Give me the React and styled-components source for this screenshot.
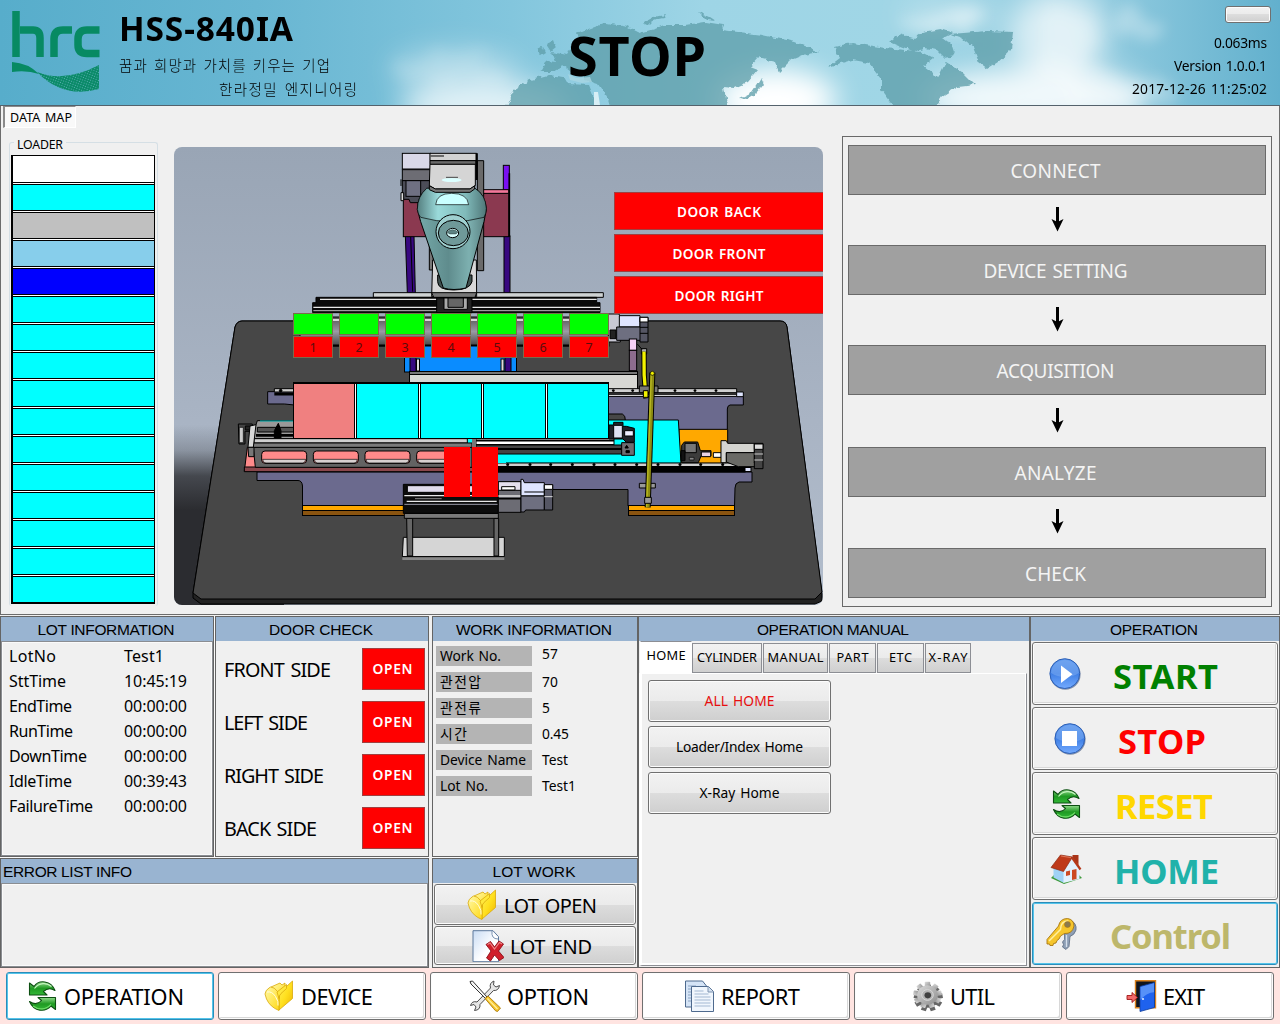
import React, { useLayoutEffect, useRef, useState } from "react";
import styled, { createGlobalStyle } from "styled-components";

const UI = '"Noto Sans", "Noto Sans CJK KR", sans-serif';
const HEAD = '"Liberation Sans", "Noto Sans CJK KR", sans-serif';

const GlobalStyle = createGlobalStyle`
  * { box-sizing: border-box; }
  body { margin: 0; background: #f0f0f0; overflow: hidden; font-family: ${UI}; }
  button { font: inherit; color: inherit; margin: 0; padding: 0; }
`;

/* ---------- text ---------- */

const TextBox = styled.span`
  display: inline-block;
  flex: none;
  white-space: pre;
  font-family: ${(p) => p.$family || UI};
  font-size: ${(p) => p.$size}px;
  font-weight: ${(p) => p.$weight || 400};
  color: ${(p) => p.$color || "#000"};
  line-height: ${(p) => p.$line || 1.2};
  padding-top: ${(p) => (p.$family ? 0 : 0.1)}em;
  word-spacing: ${(p) => (p.$family ? 0 : 0.1)}em;
`;

/* Tracks the letters so that the text spans the given width. */
function Text({ w, size, weight, color, family, line, children }) {
  const ref = useRef(null);
  const [track, setTrack] = useState(0);
  useLayoutEffect(() => {
    if (!w) return;
    const el = ref.current;
    el.style.letterSpacing = "0px";
    const natural = el.getBoundingClientRect().width;
    const count = Math.max(1, String(children).length - 1);
    const next = (w - natural) / count;
    el.style.letterSpacing = `${next}px`;
    setTrack(next);
  }, [w, children]);
  return (
    <TextBox
      ref={ref}
      $size={size}
      $weight={weight}
      $color={color}
      $family={family}
      $line={line}
      style={{ letterSpacing: track, marginRight: -track }}
    >
      {children}
    </TextBox>
  );
}

/* ---------- layout ---------- */

const Screen = styled.div`
  width: 1280px;
  height: 1024px;
  display: flex;
  flex-direction: column;
  background: #f0f0f0;
  overflow: hidden;
`;

const Header = styled.header`
  position: relative;
  height: 106px;
  border-bottom: 1px solid #54626c;
  display: grid;
  grid-template-columns: 560px 154px 1fr;
  overflow: hidden;
`;

const HeaderArt = styled.svg`
  position: absolute;
  inset: 0;
`;

const Brand = styled.div`
  position: relative;
  display: flex;
  padding: 10px 0 0 11px;
  gap: 18px;
`;

const BrandText = styled.div`
  display: flex;
  flex-direction: column;
  align-items: flex-start;
  margin-top: -8px;
`;

const Slogan = styled.div`
  display: flex;
  height: 24px;
  align-items: center;
  padding-left: ${(p) => p.$indent || 0}px;
`;

const TitleRow = styled.div`
  height: 51px;
  display: flex;
  align-items: flex-start;
`;

const State = styled.div`
  position: relative;
  display: flex;
  align-items: center;
  justify-content: center;
`;

const Info = styled.div`
  position: relative;
  display: flex;
  flex-direction: column;
  align-items: flex-end;
  padding: 6px 9px 0 0;
`;

const InfoLine = styled.div`
  height: 23px;
  display: flex;
  align-items: center;
  padding-right: 4px;
`;

const MiniButton = styled.button`
  width: 46px;
  height: 17px;
  margin-bottom: 8px;
  border: 1px solid #707070;
  border-radius: 3px;
  box-shadow: inset 0 0 0 1px #fcfcfc;
  background: linear-gradient(#f2f2f2 0%, #ebebeb 50%, #dddddd 50%, #cfcfcf 100%);
`;

const MapPage = styled.section`
  height: 509px;
  border: 1px solid #6c6c6c;
  border-top: 0;
  display: flex;
  background: #f0f0f0;
`;

const LoaderColumn = styled.div`
  width: 173px;
  display: flex;
  flex-direction: column;
  align-items: flex-start;
`;

const PageTab = styled.div`
  margin-left: 2px;
  width: 73px;
  height: 22px;
  padding-left: 5px;
  display: flex;
  align-items: center;
  background: #f9f9f9;
  border: 1px solid #fff;
  border-top: 1px solid #8a8a8a;
  border-left: 2px solid #8a8a8a;
`;

const LoaderBox = styled.fieldset`
  margin: 7px 0 0 8px;
  padding: 0 2px 0 1px;
  width: 149px;
  height: 471px;
  border: 1px solid #d5dfe5;
  border-bottom: 0;
  border-radius: 3px;
  min-width: 0;
`;

const LoaderLegend = styled.legend`
  margin-left: 3px;
  padding: 0 3px;
  height: 15px;
  line-height: 1;
`;

const LoaderList = styled.div`
  margin-top: 5px;
  border: 1px solid #000;
  border-left-width: 2px;
  width: 144px;
  background: #fff;
`;

const LoaderSlot = styled.div`
  height: 27px;
  background: ${(p) => p.$color};
  border-bottom: 1px solid #000;
  border-top: 1px solid #000;
  margin-bottom: 1px;
  &:first-child {
    border-top: 0;
  }
  &:last-child {
    margin-bottom: 0;
  }
`;

const Machine = styled.div`
  position: relative;
  width: 649px;
  height: 458px;
  margin-top: 41px;
  border-radius: 8px;
  overflow: hidden;
`;

const MachineArt = styled.svg`
  display: block;
`;

const DoorStack = styled.div`
  position: absolute;
  right: 0;
  top: 45px;
  width: 209px;
  display: flex;
  flex-direction: column;
  gap: 4px;
`;

const DoorFlag = styled.div`
  height: 38px;
  background: #ff0000;
  border: 1px solid #a04040;
  border-right: 0;
  display: flex;
  align-items: center;
  justify-content: center;
`;

const CellGrid = styled.div`
  position: absolute;
  left: 119px;
  top: 166px;
  display: grid;
  grid-template-columns: repeat(7, 40px);
  column-gap: 6px;
  row-gap: 1px;
`;

const Cell = styled.div`
  height: 22px;
  background: ${(p) => (p.$on ? "#00ff00" : "#ff0000")};
  border: 1px solid #7c6a4c;
  display: flex;
  align-items: center;
  justify-content: center;
`;

const Tray = styled.div`
  position: absolute;
  left: 119px;
  top: 235px;
  width: 316px;
  height: 57px;
  display: grid;
  grid-template-columns: repeat(5, 1fr);
  column-gap: 3px;
  background: #fff;
  border: 1px solid #000;
  border-top-width: 2px;
`;

const TraySlot = styled.div`
  background: ${(p) => p.$color};
  box-shadow: 0 0 0 1px #000;
`;

const Pair = styled.div`
  position: absolute;
  left: 270px;
  top: 300px;
  display: flex;
  gap: 2px;
`;

const PairBlock = styled.div`
  width: 26px;
  height: 50px;
  background: #ff0000;
`;

const Flow = styled.div`
  width: 430px;
  height: 471px;
  margin: 30px 0 0 19px;
  border: 1px solid #696969;
  padding: 8px 5px;
  display: grid;
  grid-template-rows: 50px 50px 50px 50px 50px 52px 50px 51px 50px;
`;

const FlowStep = styled.div`
  background: #a0a0a0;
  border: 1px solid #6a6a6a;
  display: flex;
  align-items: center;
  justify-content: center;
  padding-right: 3px;
`;

const FlowArrow = styled.div`
  display: flex;
  align-items: center;
  justify-content: center;
  padding: 0 1px 3px 0;
`;

const Bottom = styled.section`
  margin-top: 1px;
  height: 352px;
  display: grid;
  grid-template-columns: 429px 3px 206px 392px 250px;
  background: #f0f0f0;
`;

const Column = styled.div`
  display: flex;
  flex-direction: column;
  gap: 1px;
  background: #fbfbfb;
`;

const PairRow = styled.div`
  display: flex;
  gap: 1px;
  height: 241px;
`;

const Panel = styled.section`
  width: ${(p) => (p.$w ? `${p.$w}px` : "auto")};
  height: ${(p) => p.$h}px;
  border: 1px solid #646464;
  background: #f0f0f0;
  display: flex;
  flex-direction: column;
`;

const PanelHead = styled.h2`
  margin: 0;
  height: 24px;
  flex: none;
  background: #99b4d1;
  display: flex;
  align-items: center;
  justify-content: ${(p) => (p.$left ? "flex-start" : "center")};
  padding: 2px 4px 0 2px;
`;

const Inset = styled.div`
  flex: 1;
  border: 1px solid #8a8d92;
  box-shadow: inset 0 0 0 1px #fafafa;
  padding: ${(p) => p.$pad || "0"};
`;

const LotRow = styled.div`
  display: grid;
  grid-template-columns: 115px 1fr;
  align-items: center;
  height: 25px;
`;

const DoorRow = styled.div`
  height: 42px;
  margin: 7px 3px 4px 8px;
  display: flex;
  align-items: center;
  justify-content: space-between;
`;

const OpenFlag = styled.div`
  width: 63px;
  height: 42px;
  background: #ff0000;
  border: 1px solid #a04040;
  display: flex;
  align-items: center;
  justify-content: center;
  padding-right: 2px;
`;

const WorkList = styled.div`
  padding: 5px 0 0 3px;
  display: flex;
  flex-direction: column;
  gap: 6px;
`;

const WorkRow = styled.div`
  display: flex;
  height: 20px;
  align-items: center;
  gap: 10px;
`;

const WorkLabel = styled.div`
  width: 96px;
  height: 20px;
  background: #b4b4b4;
  padding-left: 4px;
  display: flex;
  align-items: center;
`;

const WorkValue = styled.div`
  display: flex;
  margin-top: ${(p) => p.$shift || 0}px;
`;

const glass = "linear-gradient(#f2f2f2 0%, #ebebeb 50%, #dddddd 50%, #cfcfcf 100%)";

const PushButton = styled.button`
  width: ${(p) => (p.$w ? `${p.$w}px` : "auto")};
  height: ${(p) => p.$h}px;
  flex: none;
  border: 1px solid ${(p) => (p.$focus ? "#2a8dba" : "#707070")};
  border-radius: 3px;
  box-shadow: ${(p) =>
    p.$focus
      ? "inset 0 0 0 1px #54c4ea"
      : p.$flat
      ? "inset 0 0 0 1px #fcfcfc, inset -2px -2px 0 0 #d8d8d8"
      : "inset 0 0 0 1px #fcfcfc"};
  background: ${(p) => p.$fill || glass};
  display: flex;
  align-items: center;
  justify-content: ${(p) => (p.$pad === undefined ? "center" : "flex-start")};
  padding-left: ${(p) => p.$pad || 0}px;
  gap: ${(p) => p.$gap || 0}px;
`;

const LotButtons = styled.div`
  flex: 1;
  padding: 1px 1px 0;
  display: flex;
  flex-direction: column;
  gap: 1px;
`;

const TabArea = styled.div`
  flex: 1;
  display: flex;
  flex-direction: column;
  padding: 0 2px 1px 0;
`;

const TabStrip = styled.div`
  display: flex;
  align-items: flex-end;
  height: 32px;
  padding-left: 1px;
`;

const Tab = styled.div`
  width: ${(p) => p.$w}px;
  height: ${(p) => (p.$active ? 32 : 30)}px;
  border: 1px solid ${(p) => (p.$active ? "#fff" : "#8c8e94")};
  border-top-color: #8c8e94;
  margin-right: ${(p) => (p.$active ? 0 : 1)}px;
  background: ${(p) => (p.$active ? "#fff" : glass)};
  display: flex;
  align-items: center;
  justify-content: center;
  padding-bottom: ${(p) => (p.$active ? 4 : 1)}px;
`;

const TabPage = styled.div`
  flex: 1;
  border: 1px solid #8c8e94;
  border-left: 3px solid #fff;
  border-top: 1px solid #fff;
  box-shadow: inset -1px -2px 0 #fff;
  padding: 6px 0 0 6px;
  display: flex;
  flex-direction: column;
  gap: 4px;
`;

const OpButtons = styled.div`
  padding: 1px 0 0 1px;
  display: flex;
  flex-direction: column;
  gap: 2px;
`;

const Nav = styled.nav`
  flex: 1;
  background: #ffe4e1;
  display: flex;
  gap: 4px;
  padding: 4px 6px 0;
`;

/* ---------- icons ---------- */

const Icon = ({ children, size = 32 }) => (
  <svg width={size} height={size} viewBox="0 0 32 32" style={{ flex: "none" }}>
    {children}
  </svg>
);

const PlayIcon = () => (
  <Icon>
    <defs>
      <linearGradient id="ball" x1="0" y1="0" x2="0" y2="1">
        <stop offset="0" stopColor="#5b97ee" />
        <stop offset=".5" stopColor="#3f7fe4" />
        <stop offset="1" stopColor="#74abff" />
      </linearGradient>
    </defs>
    <circle cx="16.3" cy="16.5" r="15.3" fill="#38507c" opacity=".6" />
    <circle cx="15.8" cy="15.6" r="14.9" fill="url(#ball)" stroke="#2d5fb4" />
    <path d="M2 15a14 13 0 0 1 28 0q-6 4-14 4t-14-4z" fill="#8ab5f5" opacity=".45" />
    <path d="M12 7.5v17.5l11.5-8.7z" fill="#fff" />
  </Icon>
);

const StopIcon = () => (
  <Icon>
    <circle cx="16.3" cy="16.5" r="15.3" fill="#38507c" opacity=".6" />
    <circle cx="15.8" cy="15.6" r="14.9" fill="url(#ball)" stroke="#2d5fb4" />
    <path d="M2 15a14 13 0 0 1 28 0q-6 4-14 4t-14-4z" fill="#8ab5f5" opacity=".45" />
    <rect x="8" y="8" width="15" height="15" fill="#fff" />
  </Icon>
);

const RefreshIcon = () => (
  <Icon>
    <defs>
      <linearGradient id="leaf" x1="0" y1="0" x2="0" y2="1">
        <stop offset="0" stopColor="#8fd98a" />
        <stop offset=".5" stopColor="#1f9a22" />
        <stop offset="1" stopColor="#33b838" />
      </linearGradient>
    </defs>
    <g fill="url(#leaf)" stroke="#0d4f12" strokeWidth="1.1" strokeLinejoin="round">
      <path d="M2.500 3L7 6.500C12-.8 24 .3 28 10.500C24 8 19.500 8.500 16.500 11.500L20 15H2.500z" />
      <path d="M28.500 29.500L24 26C18.500 32.500 7 32 2.500 21.500C7 24.500 11.500 24 14.500 20.500L11 17.500H28.500z" />
    </g>
    <path d="M7.500 8.500C12 2.500 20 2.300 24.500 6.500" fill="none" stroke="#c4f3bd" strokeWidth="1.200" />
    <path d="M6 26C11 30 19 30 24 24.300" fill="none" stroke="#6ddb66" strokeWidth="1.200" />
  </Icon>
);

const HouseIcon = () => (
  <Icon>
    <path d="M1 25l13 6 18-6-5-5H6z" fill="#3d9a3a" />
    <path d="M3.500 14l10.500 5V30L3.500 24.500z" fill="#9fd2f5" />
    <path d="M13.500 18L22 5.500l7.500 10V26L13.500 30z" fill="#e2f1fd" />
    <path d="M22.500 2h6v10l-6-6z" fill="#a93519" />
    <path d="M1 14.500L10.500 2L22.500 4L13.500 18.500z" fill="#bf3a1a" stroke="#8a2a12" strokeWidth=".7" />
    <path d="M22 4.500l8.500 12" stroke="#b5381a" strokeWidth="2.200" />
    <path d="M11 3l10 1.600" stroke="#e2795a" strokeWidth="1" />
    <path d="M22 17l4.500-1v10l-4.500 1z" fill="#cc4a22" />
    <path d="M16 18.500l4-1v4.500l-4 1z" fill="#cc4a22" />
  </Icon>
);

const KeysIcon = () => (
  <Icon>
    <path d="M24 2q7 3 6 10q-1.500 5-6 6.500l-1 10-3 3-3.500-2.500 1-2.500-1-2.500 2-2.500v-8z" fill="#8e9fb5" stroke="#5b6a80" strokeWidth=".8" />
    <path d="M20.500 17v12" stroke="#d5dfeb" strokeWidth="1.300" />
    <path d="M12.500 8q1.500-7.500 9-7.500q6.500 1 6.500 7.500q-1.500 8-9.500 7.500l-4 2.500-1.500 3-2 1.500-1 2.500-2.500.500-.5 2H4l-.5-1.500H1v-4.500z" fill="#f5c52c" stroke="#a87710" strokeWidth=".9" />
    <path d="M3 23L14.500 11.500q0-8.500 8-8.500" fill="none" stroke="#fff0a0" strokeWidth="1.500" />
    <circle cx="21.500" cy="6.500" r="3" fill="#8a7a50" stroke="#a87710" strokeWidth=".6" />
  </Icon>
);

const FolderIcon = () => (
  <Icon>
    <defs>
      <linearGradient id="fold" x1="0" y1="0" x2="1" y2="1">
        <stop offset="0" stopColor="#fff15a" />
        <stop offset=".5" stopColor="#ffe01f" />
        <stop offset="1" stopColor="#eeb600" />
      </linearGradient>
      <linearGradient id="foldLight" x1="0" y1="0" x2="1" y2="1">
        <stop offset="0" stopColor="#fff9a8" />
        <stop offset="1" stopColor="#ffd916" />
      </linearGradient>
    </defs>
    <g stroke="#d9a80a" strokeWidth=".8" strokeLinejoin="round">
      <path d="M7 7l9-4 2 2 3-2v10l-8 8z" fill="url(#foldLight)" />
      <path d="M15 16q0-3 2-4.500L28.500 1V18.500L15 30z" fill="url(#fold)" />
      <path d="M1 14q.5-4 4-6l1.500-1q4 0 7 4.500l1.500 3V30.500Q6 27 2.500 19z" fill="url(#foldLight)" />
      <path d="M13 12L22.500 4.500v4L17 13.500q-2 2-2 5z" fill="#ffe83c" />
    </g>
    <path d="M3 12q5-1 8.500 4.500t2.500 9" fill="none" stroke="#fffde0" strokeWidth="1" />
  </Icon>
);

const PageDeleteIcon = () => (
  <Icon>
    <defs>
      <linearGradient id="sheet" x1="0" y1="0" x2="1" y2="1">
        <stop offset="0" stopColor="#c9dcf4" />
        <stop offset=".6" stopColor="#ffffff" />
      </linearGradient>
    </defs>
    <path d="M1 .7h20l5.500 6v25H1z" fill="url(#sheet)" stroke="#5c789c" />
    <path d="M20 1q-1 8 6 8" fill="#fff" stroke="#7c93b0" />
    <path d="M14 14.500l4.500-3 4 5.500 4.500-6 4.500 3-5 7 5.500 6.500-4.500 3-5-5.500-4 6-4-3 4.500-7z" fill="#d0202b" stroke="#8c0f18" strokeWidth=".9" />
    <path d="M15.500 14.500l2.500-1.500 4.500 6 5-6.500 2.500 1.500" fill="none" stroke="#f08a8a" strokeWidth="1.100" />
  </Icon>
);

const ToolsIcon = () => (
  <Icon>
    <path d="M25 1q-5 2-3.500 7L8 22q-5-1.500-6.500 3.500l3.500-1 2 2.500-1.500 3.500q6-.5 5.500-6L24.500 10.500q5 .5 6-5l-3.500 1.500-2.500-2z" fill="#e6e6e6" stroke="#4c4c4c" strokeWidth="1" />
    <path d="M1 1.500l2.500-.5L18 17l-1.500 1.500L2 4z" fill="#f5f5f5" stroke="#333" strokeWidth="1" />
    <path d="M16 18.500l3-2.500L31.500 28l-3 3.500q-2 0-4-3z" fill="#f7c52a" stroke="#a8780c" strokeWidth=".9" />
    <path d="M18.500 18.500l10 10.500" stroke="#fff0a0" strokeWidth="1.200" />
  </Icon>
);

const DocsIcon = () => (
  <Icon>
    <path d="M2.500 1h17l4 5v21h-21z" fill="#d5e4f6" stroke="#4e6a8e" />
    <path d="M5 6h8M5 9h5M5 12h5M5 15h5M5 18h5M5 21h5" stroke="#8aa3c2" />
    <path d="M8.500 6.500h17l5 5v20h-22z" fill="#f0f6fd" stroke="#4e6a8e" />
    <path d="M25 6.500v5.500h5.500" fill="#d3e0f0" stroke="#7c93b0" />
    <path d="M11.500 11h9M11.500 14h14M11.500 17h16M11.500 20h16M11.500 23h16M11.500 26h16" stroke="#a3b8d2" />
  </Icon>
);

const GearIcon = () => {
  const teeth = Array.from({ length: 9 }, (_, i) => i * 40);
  return (
    <Icon>
      <defs>
        <linearGradient id="steel" x1="0" y1="0" x2="1" y2="1">
          <stop offset="0" stopColor="#dcdcdc" />
          <stop offset="1" stopColor="#8c8c8c" />
        </linearGradient>
      </defs>
      <g transform="translate(16.300 18) scale(1 .92)" fill="#666">
        <circle r="10.500" />
        {teeth.map((a) => (
          <rect key={a} x="-2.600" y="-14.500" width="5.200" height="6" transform={`rotate(${a})`} />
        ))}
      </g>
      <g transform="translate(15.500 15) scale(1 .92)" fill="url(#steel)">
        {teeth.map((a) => (
          <rect key={a} x="-2.700" y="-14.300" width="5.400" height="6" rx=".8" transform={`rotate(${a})`} />
        ))}
        <circle r="10.500" />
        <circle r="5.800" fill="#b4b4b4" stroke="#d8d8d8" />
        <circle cx=".3" cy=".4" r="3.300" fill="#404040" />
      </g>
    </Icon>
  );
};

const ExitIcon = () => (
  <Icon>
    <path d="M9.500.8h20v27h-20z" fill="#10151e" stroke="#d9821f" strokeWidth="1.400" />
    <path d="M14 6.500L28.500 2.500V27.500L14 31.500z" fill="#1f62ee" stroke="#123f9c" strokeWidth=".8" />
    <path d="M14.500 7l13.500-3.800v9q-7 0-13.500 7.500z" fill="#6ba2fb" opacity=".75" />
    <circle cx="17" cy="19" r="1.100" fill="#d8e6ff" />
    <path d="M1 15.500h5v-3l5.500 5-5.500 5v-3H1z" fill="#f26a6a" stroke="#a01818" strokeWidth=".9" />
  </Icon>
);

const DownArrow = () => (
  <svg width="14" height="26" viewBox="0 0 14 26">
    <path d="M7.500 1v16" stroke="#000" strokeWidth="3" />
    <path d="M1.500 13L7.500 25.500L13.500 13L7.500 16z" fill="#000" />
  </svg>
);

const Logo = () => (
  <svg width="90" height="84" viewBox="0 0 90 84">
    <defs>
      <pattern id="mesh" width="2.500" height="2.500" patternUnits="userSpaceOnUse" patternTransform="rotate(20)">
        <rect width="2.500" height="2.500" fill="#0a8a68" />
        <circle cx="1.200" cy="1.200" r=".55" fill="#5fb3b8" />
      </pattern>
    </defs>
    <g fill="none" stroke="#078a63" strokeWidth="7.500">
      <path d="M5 1v46" />
      <path d="M9 20h13q7 0 7 8v19" />
      <path d="M43 47V29q0-9 9-9h9" />
      <path d="M88.500 20H76q-9 0-9 9v6q0 8.500 9 8.500h12.500" />
    </g>
    <path d="M1 52q16 1 27 12q-12-4-27-2z" fill="#078a63" />
    <path d="M26 62q28 11 62-7v24q-36 10-62-17z" fill="url(#mesh)" />
  </svg>
);

/* ---------- pictures ---------- */

const HeaderPicture = () => (
  <HeaderArt width="1280" height="105" viewBox="0 0 1280 105">
    <defs>
      <linearGradient id="sky" x1="0" x2="1">
        <stop offset="0" stopColor="#57adcb" />
        <stop offset=".2" stopColor="#68b6d2" />
        <stop offset=".4" stopColor="#83c6dd" />
        <stop offset=".55" stopColor="#9ed5e6" />
        <stop offset=".7" stopColor="#a0d6e6" />
        <stop offset=".86" stopColor="#92cce0" />
        <stop offset="1" stopColor="#62b0cd" />
      </linearGradient>
      <filter id="soft" x="-50%" y="-60%" width="200%" height="220%">
        <feGaussianBlur stdDeviation="14" />
      </filter>
      <filter id="wisp" x="-30%" y="-30%" width="160%" height="160%">
        <feTurbulence type="fractalNoise" baseFrequency=".035" numOctaves="4" seed="4" result="n" />
        <feDisplacementMap in="SourceGraphic" in2="n" scale="40" xChannelSelector="R" yChannelSelector="G" result="d" />
        <feGaussianBlur in="d" stdDeviation="7" />
      </filter>
      <filter id="coast" x="-5%" y="-10%" width="110%" height="120%">
        <feTurbulence type="fractalNoise" baseFrequency=".16" numOctaves="2" seed="8" result="n" />
        <feDisplacementMap in="SourceGraphic" in2="n" scale="6" xChannelSelector="R" yChannelSelector="G" />
      </filter>
    </defs>
    <rect width="1280" height="105" fill="url(#sky)" />
    <g fill="#fff" filter="url(#soft)">
      <ellipse cx="455" cy="70" rx="65" ry="22" opacity=".35" />
      <ellipse cx="485" cy="108" rx="85" ry="26" opacity=".75" />
      <ellipse cx="775" cy="100" rx="62" ry="32" opacity="1" />
      <ellipse cx="1058" cy="34" rx="48" ry="44" opacity=".65" />
      <ellipse cx="1035" cy="98" rx="115" ry="30" opacity=".85" />
      <ellipse cx="950" cy="15" rx="50" ry="12" opacity=".4" />
    </g>
    <g fill="#fff" filter="url(#wisp)">
      <ellipse cx="1062" cy="45" rx="30" ry="40" opacity=".22" />
      <ellipse cx="1135" cy="26" rx="20" ry="14" opacity=".3" />
      <ellipse cx="945" cy="20" rx="42" ry="9" opacity=".45" />
      <ellipse cx="450" cy="68" rx="60" ry="14" opacity=".12" />
      <ellipse cx="1120" cy="90" rx="60" ry="14" opacity=".25" />
    </g>
    <g fill="#5f9fab" opacity=".78" filter="url(#coast)">
      <path d="M506 106L514 90L530 80L549 75L563 77L567 84L588 85L592 95L600 106Z" />
      <path d="M541 72L547 61L556 62L552 52L566 55L572 46L582 44L577 34L592 28L606 23L628 27L640 33L654 29L664 25L685 25L705 22L724 25L722 30L762 35L795 42L820 52L803 55L791 60L779 72L775 62L758 58L750 67L758 70L748 82L734 88L724 87L727 106L612 106L598 84L585 80L586 73L572 72L562 64L556 72Z" />
      <path d="M546 44l7-4 3 8-5 4zM538 50l5-2 2 4-5 3z" />
      <path d="M761 78l3 6-6 8-12 7-6-1 12-6 6-9z" />
      <path d="M644 24q6-8 22-9l-2 3q-12 2-16 8z" />
      <path d="M698 12l12 5 6 4-10-1z" />
      <path d="M834 47L852 43L885 48L905 50L922 52L934 58L924 66L932 72L938 78L946 62L962 72L975 85L958 87L942 97L936 106L893 106L881 90L881 78L869 63L852 60L828 67L840 58Z" />
      <path d="M889 42l10-8 14 4 10-6 18-3 12 4-10 5 8 6 4 12-10 2-8-8-12-2-10 4-14-5z" />
      <path d="M950 34L987 31L1013 32L1011 50L998 62L987 69L979 63L973 47L962 38Z" />
    </g>
    <path d="M594 92l4 0 2 13h-6z" fill="#d7eef5" />
    <path d="M568 74l8 4 14-1 2 5-10 1-12-3z" fill="#a9d6e2" opacity=".8" />
  </HeaderArt>
);

const Pocket = ({ x }) => (
  <g>
    <rect x={x} y="243" width="135" height="37" rx="10" fill="#ff8a8a" stroke="#000" strokeWidth="3" />
    <path d={`M${x + 3} 268h129q0 11-10 11h-109q-10 0-10-11z`} fill="#d8d0d0" stroke="#000" strokeWidth="2" />
  </g>
);

const MachinePicture = () => (
  <MachineArt width="649" height="458" viewBox="174 147 649 458">
    <defs>
      <linearGradient id="wall" x1="0" y1="0" x2="0" y2="1">
        <stop offset="0" stopColor="#99a5b5" />
        <stop offset=".6" stopColor="#a9b4c4" />
        <stop offset="1" stopColor="#b2bdcc" />
      </linearGradient>
      <linearGradient id="shade" x1="0" y1="425" x2="0" y2="510" gradientUnits="userSpaceOnUse">
        <stop offset="0" stopColor="#2b2c30" stopOpacity="0" />
        <stop offset=".3" stopColor="#2b2c30" stopOpacity=".25" />
        <stop offset=".6" stopColor="#2b2c30" stopOpacity=".8" />
        <stop offset="1" stopColor="#2b2c30" />
      </linearGradient>
      <linearGradient id="teal" x1="0" x2="1">
        <stop offset="0" stopColor="#76aaaa" />
        <stop offset=".45" stopColor="#5f8c8d" />
        <stop offset=".75" stopColor="#7db0b0" />
        <stop offset="1" stopColor="#587f80" />
      </linearGradient>
      <linearGradient id="tealTop" x1="0" x2="1">
        <stop offset="0" stopColor="#557f80" />
        <stop offset=".3" stopColor="#9adada" />
        <stop offset=".7" stopColor="#80baba" />
        <stop offset="1" stopColor="#4f7778" />
      </linearGradient>
      <linearGradient id="beam" x1="0" y1="0" x2="0" y2="1">
        <stop offset="0" stopColor="#555" />
        <stop offset=".5" stopColor="#9a9aa4" />
        <stop offset="1" stopColor="#444" />
      </linearGradient>
    </defs>
    <rect x="174" y="147" width="649" height="458" fill="url(#wall)" />
    <rect x="174" y="420" width="110" height="185" fill="url(#shade)" />

    <path d="M235 327Q237 321 242 321H780Q786 321 787 327L822 594V601L815 604H201L193 598V593Z" fill="#222" stroke="#000" />
    <path d="M235 327Q237 321 242 321H780Q786 321 787 327L822 592L815 599H201L193 593Z" fill="#474747" stroke="#000" />

    {/* gantry, arm and upper rails */}
    <g transform="translate(170 140) scale(.33333)" stroke="#000" strokeWidth="3">
      <rect x="1000" y="76" width="18" height="75" fill="#7a10f0" />
      <rect x="1002" y="288" width="18" height="172" fill="#380880" />
      <path d="M1018 100v190" strokeWidth="5" />
      <path d="M706 285h26l4 175h-24z" fill="#380880" />
      <path d="M722 290l6 165" />
      <rect x="700" y="160" width="316" height="130" fill="#8b3950" />
      <rect x="930" y="149" width="86" height="11" fill="#f2789a" />
      <path d="M922 62h19v330h-19z" fill="#6a6a6a" />
      <path d="M778 290h12v100h-12z" fill="#777" />
      <rect x="697" y="40" width="84" height="47" fill="#d9d8e8" />
      <rect x="697" y="89" width="84" height="33" fill="#6d6d74" />
      <path d="M697 122h84v66h-60l-4-10h-20z" fill="#4c4d58" />
      <rect x="708" y="122" width="44" height="47" fill="#6f7082" />
      <path d="M693 118v20M693 158h8v24h-8z" fill="#ddd" />
      <path d="M610 458h690v14h-690z" fill="#cfd3d3" />
      <path d="M438 472h842v16h10v30h-862v-30h10z" fill="#0a0a0a" />
      <path d="M450 478h830M430 502h860" stroke="#e8e8e8" strokeWidth="4" />
      <path d="M430 512h860" stroke="#bbb" strokeWidth="3" />
      <path d="M788 360L785 470H920L919 360Z" fill="#d8d8d8" />
      <path d="M785 458h135l-5 14h-124z" fill="#777" />
      <path d="M803 425q0 25 48 25t55-25v-20h-103z" fill="#40504f" />
      <path d="M770 145Q742 170 742 208L752 245L820 444Q850 453 888 444L942 245L949 208Q947 165 915 145Z" fill="url(#teal)" />
      <path d="M770 145Q742 170 742 208Q744 224 752 232Q845 258 942 232Q949 222 949 205Q947 165 915 145Z" fill="url(#tealTop)" strokeWidth="2" />
      <path d="M797 194Q800 160 845 160Q892 160 896 194Z" fill="#c9ffff" strokeWidth="2" />
      <circle cx="849" cy="275" r="51" fill="#9fd0d0" />
      <ellipse cx="850" cy="279" rx="45" ry="38" fill="#6f9999" strokeWidth="3" />
      <ellipse cx="848" cy="279" rx="18" ry="14" fill="#d8ffff" />
      <path d="M832 276q14-14 32 0l-6 6h-20z" fill="#5d8383" strokeWidth="1" />
      <path d="M780 40h140v22h-140z" fill="#d2d2d2" />
      <path d="M780 62h138v11h-138z" fill="#6a6a6a" />
      <path d="M780 73h136v64l-16 10h-104l-18-10z" fill="#d5d5d5" />
      <path d="M778 137l18 10h104l14-10v10l-14 10h-104l-18-8z" fill="#777" />
      <path d="M782 48h40" />
      <path d="M920 40v80" strokeWidth="7" />
      <ellipse cx="845" cy="120" rx="30" ry="6" fill="#dcffff" stroke="none" />
      <path d="M828 112h36" strokeWidth="2" />
      <path d="M800 474h106v44h-106z" fill="#222" />
      <path d="M822 474h70v34h-70z" fill="#aaa" />
      <path d="M834 474h46v28h-46z" fill="#666" />
    </g>
    <rect x="300" y="317" width="309" height="29" fill="url(#beam)" stroke="#000" />
    <path d="M300 320h309" stroke="#fff" strokeWidth="1.500" />
    <path d="M300 345.500h309" stroke="#000" strokeWidth="2" />

    <g stroke="#000">
      <rect x="404.500" y="346" width="112" height="26" fill="#0a8cff" />
      <rect x="410" y="346" width="6" height="26" fill="#380880" />
      <rect x="505" y="346" width="6" height="26" fill="#380880" />
      <rect x="416.500" y="359" width="3" height="12" fill="#ddd" />
      <rect x="501" y="359" width="3" height="12" fill="#ddd" />
      <rect x="409.500" y="371.500" width="228" height="18" fill="#d8d8d4" />
      <rect x="409.500" y="371.500" width="228" height="3" fill="#777" />
    </g>

    <g transform="translate(500 140) scale(.33333)" stroke="#000" strokeWidth="3">
      <path d="M325 522h32l4 10v74h-36z" fill="#c8c8d4" />
      <path d="M358 527h62v34h-62z" fill="#dfe5ff" />
      <path d="M350 561h72v40h-72z" fill="#6e6f80" />
      <path d="M420 532h24v74h-24z" fill="#555664" />
      <path d="M420 532h24v14h-24z" fill="#fff" />
      <path d="M420 562h24M420 580h24" />
      <path d="M330 570h18v26h-18z" fill="#222" />
      <rect x="388" y="597" width="22" height="34" fill="#f6cff6" />
      <rect x="388" y="631" width="22" height="61" fill="#8d6c8e" />
      <path d="M412 612l14 16M424 626h16v16h-16z" fill="#aaa" />
    </g>

    {/* rear and front bases */}
    <g transform="translate(170 370) scale(.33333)" stroke="#000" strokeWidth="3">
      <path d="M293 65h80v40l-30-3h-50z" fill="#6b6a8e" />
      <path d="M313 56h60v10h-60z" fill="#ccc" />
      <path d="M313 72h60" strokeWidth="9" />
      <circle cx="332" cy="62" r="4" />
      <path d="M262 152h112v54h-130z" fill="#9a9a9a" />
      <path d="M270 153h100" stroke="#0bb" />
      <path d="M262 172h110v14h-110z" fill="#555" />
      <path d="M258 196h114" strokeWidth="8" />
      <path d="M325 160l8 22v22h-20v-22z" fill="#000" />
    </g>
    <g transform="translate(500 370) scale(.33333)" stroke="#000" strokeWidth="3">
      <path d="M325 78h405v27h-40q-8 2-8 12v63h-357z" fill="#6b6a8e" />
      <path d="M325 56h385v12h-385z" fill="#cfcfcf" />
      <path d="M325 76h385" strokeWidth="9" />
      <path d="M325 76h385" stroke="#fff" />
      <path d="M710 66h20v14h-20z" fill="#dfe5ff" />
      <path d="M325 132h42q10 4 9 20h-51z" fill="#474747" />
      <path d="M537 178h146v102h-146z" fill="#ffa800" />
      <path d="M-150 150H535L543 280H-150Z" fill="#0ff" />
    </g>
    <path d="M257 472H752V482H739Q735 483 735 488L734.500 506H628V489.500H407V506H302.500V486Q302 480.500 298 480.500H257Z" fill="#6b6a8e" stroke="#000" />
    <g stroke="#000">
      <rect x="302.500" y="505.500" width="104" height="5" fill="#ffa800" />
      <rect x="302.500" y="510.500" width="104" height="5" fill="#8a5410" />
      <rect x="628.500" y="505.500" width="106" height="5" fill="#ffa800" />
      <rect x="628.500" y="510.500" width="106" height="5" fill="#8a5410" />
      <rect x="497" y="463" width="248" height="3.500" fill="#cfcfcf" />
      <rect x="497" y="467" width="248" height="5" fill="#000" />
      <rect x="745" y="467.500" width="6" height="4" fill="#dfe5ff" />
    </g>
    {[340, 398, 460, 525, 585, 648].map((x) => (
      <circle key={x} cx={500 + x / 3} cy="390.600" r="1.400" />
    ))}
    {[23, 90, 152, 217, 282, 345, 410, 474, 540, 602, 668].map((x) => (
      <circle key={x} cx={500 + x / 3} cy="464.600" r="1.500" />
    ))}

    {/* carriage beam */}
    <g transform="translate(170 370) scale(.33333)" stroke="#000" strokeWidth="3">
      <path d="M232 232l-9 72h100v-40l-68-32z" fill="#ff8a8a" />
      <path d="M223 291h720v14h-720z" fill="#8b474c" />
      <path d="M250 232h656v60h-650z" fill="#636363" />
      {[275, 430, 585, 740].map((x) => (
        <Pocket key={x} x={x} />
      ))}
      <path d="M252 206h640v13h-640z" fill="#cfcfcf" />
      <path d="M250 219h656v13h-656z" fill="#7a7a7a" />
      <path d="M205 162h42v22h-22v38h-18z" fill="#444" />
      <path d="M208 172h12v46h-12z" fill="#ccc" strokeWidth="2" />
      <path d="M226 168h22v12h-22z" fill="#222" />
      <path d="M240 168l18-4-8 68h-16z" fill="#d8d8d8" />
      <path d="M234 232h18v28h-16z" fill="#777" />
    </g>
    <g stroke="#000">
      <rect x="476" y="438.500" width="138" height="6" fill="#fff" />
      <path d="M476 440.500h138" strokeWidth="2" />
      <rect x="476" y="445" width="146" height="9" fill="#444" />
      <path d="M476 449h146" strokeWidth="2" />
      <rect x="472" y="438.500" width="4" height="50" fill="#777" stroke="none" />
      <rect x="498" y="455" width="8" height="8" fill="#0ff" stroke="none" />
    </g>

    <g transform="translate(500 370) scale(.33333)" stroke="#000" strokeWidth="3">
      <path d="M327 165h14l0-8h28v12h10l24 6v42h-24l-10-10h-42z" fill="#20222a" />
      <path d="M341 166h26v38h-26z" fill="#dfe2f4" />
      <path d="M374 182h26v16h-26z" fill="#eef" />
      <path d="M365 218h38v38h-38z" fill="#6e6e72" />
      <path d="M380 226l5 8h-10zM378 242h10v6h-10z" />
      <path d="M545 240v38h50l8-20h30v-16h-32l-8-26h-40l-8 10z" fill="#3c3c3c" />
      <path d="M555 220h34v28h-34z" fill="#777" />
      <path d="M543 242h12v30h-12z" fill="#111" />
      <path d="M568 262h14v8h-14z" fill="#888" strokeWidth="2" />
      <path d="M604 246h28v14h-28z" fill="#ead4e4" />
      <path d="M640 248h24v14h-24z" fill="#fff" />
      <path d="M663 212h16l4 8h80v28h-84v30h-16z" fill="#d4d4d0" />
      <path d="M679 248h84v30l12 12h-60l-36-14z" fill="#6a6a66" />
      <path d="M763 220h26v76h-26z" fill="#444" />
      <path d="M763 222h26v16h-26z" fill="#ddd" />
      <path d="M763 252h26M763 270h26" stroke="#ccc" />
    </g>

    {/* lower stand */}
    <g transform="translate(170 370) scale(.33333)" stroke="#000" strokeWidth="3">
      <path d="M700 502h303v58h-306z" fill="#d5d5d5" />
      <path d="M697 560h306v10h-306z" fill="#888" stroke="none" />
      <path d="M697 560h306" />
      <path d="M710 445h18v113h-16z" fill="#666" />
      <path d="M972 445h14v113h-14z" fill="#666" />
      <path d="M703 430h282v15h-282z" fill="#7a7a7a" />
      <path d="M700 343h285v87h-285z" fill="#0c0c0c" />
      <path d="M712 347h272v20h-272z" fill="#e0dcec" />
      <path d="M703 377h282M710 394h270" stroke="#e8e8e8" strokeWidth="4" />
      <path d="M703 403h280" stroke="#9a9aa8" />
      <path d="M735 386h80" stroke="#888" />
      <path d="M985 335h68v92h-68z" fill="#6c6c74" />
      <path d="M985 335h68v26h-68z" fill="#e4dfee" />
      <path d="M995 350h40v10h-40z" fill="#fff" />
      <path d="M985 378h68" stroke="#eee" strokeWidth="4" />
      <path d="M985 386h68" strokeWidth="5" />
      <path d="M1053 328h6l4 10h60v40h-70z" fill="#dfe5ff" />
      <path d="M1053 378h70v42h-56l-4 6h-10z" fill="#6e6f80" />
      <path d="M1063 366h60" />
      <path d="M1123 344h25v76h-25z" fill="#555664" />
      <path d="M1123 344h25v14h-25z" fill="#fff" />
      <path d="M1123 380h25" stroke="#ddd" />
    </g>

    {/* hose poles */}
    <g transform="translate(500 370) scale(.33333)">
      <path d="M432 -55q-2 70 6 140" stroke="#000" strokeWidth="16" fill="none" />
      <path d="M432 -55q-2 70 6 138" stroke="#f2f200" strokeWidth="10" fill="none" />
      <path d="M418 48h56v20h-56z" fill="#777" stroke="#000" strokeWidth="3" />
      <path d="M430 62h14v20h-14z" fill="#f2f200" stroke="#000" strokeWidth="3" />
      <path d="M418 340h48v14h-48z" fill="#999" stroke="#000" strokeWidth="3" />
      <path d="M457 8L443 412" stroke="#000" strokeWidth="18" />
      <path d="M457 10L443 412" stroke="#8d8c12" strokeWidth="12" />
      <path d="M454 10L440 412" stroke="#b8b820" strokeWidth="4" />
      <path d="M434 382h20v18h-20z" fill="#999" stroke="#000" strokeWidth="3" />
      <circle cx="457" cy="10" r="6" fill="#f2f200" stroke="#000" strokeWidth="2" />
    </g>
  </MachineArt>
);

/* ---------- data ---------- */

const slots = ["#ffffff", "#00ffff", "#c0c0c0", "#87ceeb", "#0000ff", ...Array(11).fill("#00ffff")];

const steps = [
  ["CONNECT", 90],
  ["DEVICE SETTING", 144],
  ["ACQUISITION", 118],
  ["ANALYZE", 82],
  ["CHECK", 61],
];

const lotRows = [
  ["LotNo", 47, "Test1", 40],
  ["SttTime", 57, "10:45:19", 63],
  ["EndTime", 63, "00:00:00", 63],
  ["RunTime", 64, "00:00:00", 63],
  ["DownTime", 78, "00:00:00", 63],
  ["IdleTime", 63, "00:39:43", 63],
  ["FailureTime", 84, "00:00:00", 63],
];

const doors = [
  ["FRONT SIDE", 107],
  ["LEFT SIDE", 84],
  ["RIGHT SIDE", 100],
  ["BACK SIDE", 93],
];

const workRows = [
  ["Work No.", 61, "57", 16],
  ["관전압", 41, "70", 16],
  ["관전류", 41, "5", 8],
  ["시간", 27, "0.45", 27],
  ["Device Name", 86, "Test", 26],
  ["Lot No.", 48, "Test1", 34],
];

const tabs = [
  ["HOME", 39, 52],
  ["CYLINDER", 60, 70],
  ["MANUAL", 56, 65],
  ["PART", 32, 47],
  ["ETC", 23, 47],
  ["X-RAY", 39, 46],
];

const operations = [
  ["START", "#008000", 105, 16, PlayIcon],
  ["STOP", "#ff0000", 88, 21, StopIcon],
  ["RESET", "#ffd700", 98, 18, RefreshIcon],
  ["HOME", "#20b2aa", 105, 17, HouseIcon],
  ["Control", "#bdb76b", 121, 13, KeysIcon],
];

const navItems = [
  ["OPERATION", 120, 20, 5, RefreshIcon],
  ["DEVICE", 72, 45, 5, FolderIcon],
  ["OPTION", 82, 38, 6, ToolsIcon],
  ["REPORT", 79, 40, 6, DocsIcon],
  ["UTIL", 45, 57, 6, GearIcon],
  ["EXIT", 42, 59, 5, ExitIcon],
];

/* ---------- page ---------- */

const Title = ({ w, left, children }) => (
  <PanelHead $left={left}>
    <Text size={15.5} w={w} family={HEAD}>{children}</Text>
  </PanelHead>
);

export default function App() {
  return (
    <Screen>
      <GlobalStyle />
      <Header>
        <HeaderPicture />
        <Brand>
          <Logo />
          <BrandText>
            <TitleRow>
              <Text size={33.5} weight={700} w={174} line={1.4}>HSS-840IA</Text>
            </TitleRow>
            <Slogan>
              <Text size={14.5} w={211} weight={300}>꿈과 희망과 가치를 키우는 기업</Text>
            </Slogan>
            <Slogan $indent={100}>
              <Text size={14.5} w={138} weight={300}>한라정밀 엔지니어링</Text>
            </Slogan>
          </BrandText>
        </Brand>
        <State>
          <Text size={54} weight={700} w={138}>STOP</Text>
        </State>
        <Info>
          <MiniButton />
          <InfoLine><Text size={13.8} w={53}>0.063ms</Text></InfoLine>
          <InfoLine><Text size={13.8} w={93}>Version 1.0.0.1</Text></InfoLine>
          <InfoLine><Text size={13.8} w={135}>2017-12-26 11:25:02</Text></InfoLine>
        </Info>
      </Header>

      <MapPage>
        <LoaderColumn>
          <PageTab><Text size={12.5} w={62}>DATA MAP</Text></PageTab>
          <LoaderBox>
            <LoaderLegend><Text size={12.3} w={46} line={1}>LOADER</Text></LoaderLegend>
            <LoaderList>
              {slots.map((c, i) => <LoaderSlot key={i} $color={c} />)}
            </LoaderList>
          </LoaderBox>
        </LoaderColumn>

        <Machine>
          <MachinePicture />
          <Tray>
            {["#f08080", "#00ffff", "#00ffff", "#00ffff", "#00ffff"].map((c, i) => (
              <TraySlot key={i} $color={c} />
            ))}
          </Tray>
          <Pair><PairBlock /><PairBlock /></Pair>
          <CellGrid>
            {Array.from({ length: 7 }, (_, i) => <Cell key={`g${i}`} $on />)}
            {Array.from({ length: 7 }, (_, i) => (
              <Cell key={`r${i}`}><Text size={12.5} color="#5a0c0c">{i + 1}</Text></Cell>
            ))}
          </CellGrid>
          <DoorStack>
            <DoorFlag><Text size={13.6} weight={600} color="#fff" w={84}>DOOR BACK</Text></DoorFlag>
            <DoorFlag><Text size={13.6} weight={600} color="#fff" w={93}>DOOR FRONT</Text></DoorFlag>
            <DoorFlag><Text size={13.6} weight={600} color="#fff" w={89}>DOOR RIGHT</Text></DoorFlag>
          </DoorStack>
        </Machine>

        <Flow>
          {steps.map(([name, w], i) => (
            <React.Fragment key={name}>
              {i > 0 && <FlowArrow><DownArrow /></FlowArrow>}
              <FlowStep><Text size={19} color="#f4f4f4" w={w}>{name}</Text></FlowStep>
            </React.Fragment>
          ))}
        </Flow>
      </MapPage>

      <Bottom>
        <Column>
          <PairRow>
            <Panel $w={214} $h={241}>
              <Title w={137}>LOT INFORMATION</Title>
              <Inset $pad="1px 0 0 7px">
                {lotRows.map(([k, kw, v, vw]) => (
                  <LotRow key={k}>
                    <div><Text size={16} w={kw} line={1.1}>{k}</Text></div>
                    <div><Text size={16} w={vw} line={1.1}>{v}</Text></div>
                  </LotRow>
                ))}
              </Inset>
            </Panel>
            <Panel $w={214} $h={241}>
              <Title w={104}>DOOR CHECK</Title>
              {doors.map(([name, w]) => (
                <DoorRow key={name}>
                  <Text size={19.8} w={w}>{name}</Text>
                  <OpenFlag><Text size={13.8} weight={600} color="#fff" w={40}>OPEN</Text></OpenFlag>
                </DoorRow>
              ))}
            </Panel>
          </PairRow>
          <Panel $h={110}>
            <Title w={129} left>ERROR LIST INFO</Title>
            <Inset />
          </Panel>
        </Column>
        <span />
        <Column>
          <Panel $h={241}>
            <Title w={156}>WORK INFORMATION</Title>
            <WorkList>
              {workRows.map(([k, kw, v, vw], i) => (
                <WorkRow key={k}>
                  <WorkLabel><Text size={13.8} w={kw}>{k}</Text></WorkLabel>
                  <WorkValue $shift={i === 0 ? -4 : 0}><Text size={13.8} w={vw}>{v}</Text></WorkValue>
                </WorkRow>
              ))}
            </WorkList>
          </Panel>
          <Panel $h={110}>
            <Title w={83}>LOT WORK</Title>
            <LotButtons>
              <PushButton $h={41} $pad={32} $gap={5}>
                <FolderIcon />
                <Text size={20} w={93}>LOT OPEN</Text>
              </PushButton>
              <PushButton $h={39} $pad={37} $gap={6}>
                <PageDeleteIcon />
                <Text size={20} w={82}>LOT END</Text>
              </PushButton>
            </LotButtons>
          </Panel>
        </Column>
        <Panel $h={352}>
          <Title w={152}>OPERATION MANUAL</Title>
          <TabArea>
            <TabStrip>
              {tabs.map(([name, w, full], i) => (
                <Tab key={name} $w={full} $active={i === 0}>
                  <Text size={12.8} w={w}>{name}</Text>
                </Tab>
              ))}
            </TabStrip>
            <TabPage>
              <PushButton $w={183} $h={42}><Text size={13.8} w={70} color="#e60f0f">ALL HOME</Text></PushButton>
              <PushButton $w={183} $h={42}><Text size={13.8} w={127}>Loader/Index Home</Text></PushButton>
              <PushButton $w={183} $h={42}><Text size={13.8} w={80}>X-Ray Home</Text></PushButton>
            </TabPage>
          </TabArea>
        </Panel>
        <Panel $h={352}>
          <Title w={88}>OPERATION</Title>
          <OpButtons>
            {operations.map(([name, color, w, pad, Pic], i) => (
              <PushButton key={name} $w={246} $h={63} $pad={pad} $gap={32} $flat $focus={i === 4} $fill="#f0f0f0">
                <Pic />
                <Text size={34.5} weight={700} color={color} w={w}>{name}</Text>
              </PushButton>
            ))}
          </OpButtons>
        </Panel>
      </Bottom>

      <Nav>
        {navItems.map(([name, w, pad, gap, Pic], i) => (
          <PushButton key={name} $w={208} $h={48} $pad={pad} $gap={gap} $flat $focus={i === 0} $fill="#fff">
            <Pic />
            <Text size={21.8} w={w}>{name}</Text>
          </PushButton>
        ))}
      </Nav>
    </Screen>
  );
}
